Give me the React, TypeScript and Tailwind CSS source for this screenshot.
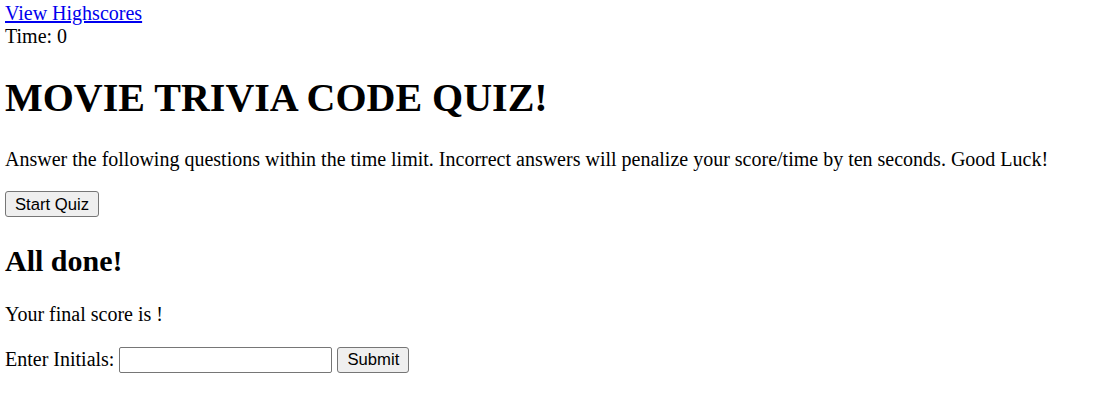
export default function App() {
  return (
    <div className="min-h-screen bg-white pl-[5px] pr-[5px] pt-[2px] text-[20px] leading-[23px] text-black font-['Liberation_Serif','Times_New_Roman',serif]">
      <header>
        <a href="#" className="text-[#0000ee] underline">View Highscores</a>
        <div>Time: 0</div>
      </header>
      <h1 className="mt-[27px] mb-[27px] text-[40px] leading-[46px] font-bold">MOVIE TRIVIA CODE QUIZ!</h1>
      <p className="mb-[20px]">
        Answer the following questions within the time limit. Incorrect answers will penalize your score/time by ten seconds. Good Luck!
      </p>
      <button className="block h-[26px] border border-[#767676] rounded-[3px] bg-[#efefef] px-[9px] text-[16.67px] leading-[19px] font-['Liberation_Sans',Arial,sans-serif]">
        Start Quiz
      </button>
      <h2 className="mt-[27px] mb-[24px] text-[30px] leading-[34.5px] font-bold">All done!</h2>
      <p className="mb-[20px]">Your final score is !</p>
      <div className="flex items-center gap-[5px] h-[28px]">
        <span>Enter Initials:</span>
        <input type="text" className="w-[213px] h-[26px] border border-[#767676] rounded-[2px] px-[2px] bg-white" />
        <button className="h-[26px] border border-[#767676] rounded-[3px] bg-[#efefef] px-[9px] text-[16.67px] leading-[19px] font-['Liberation_Sans',Arial,sans-serif]">
          Submit
        </button>
      </div>
    </div>
  );
}
